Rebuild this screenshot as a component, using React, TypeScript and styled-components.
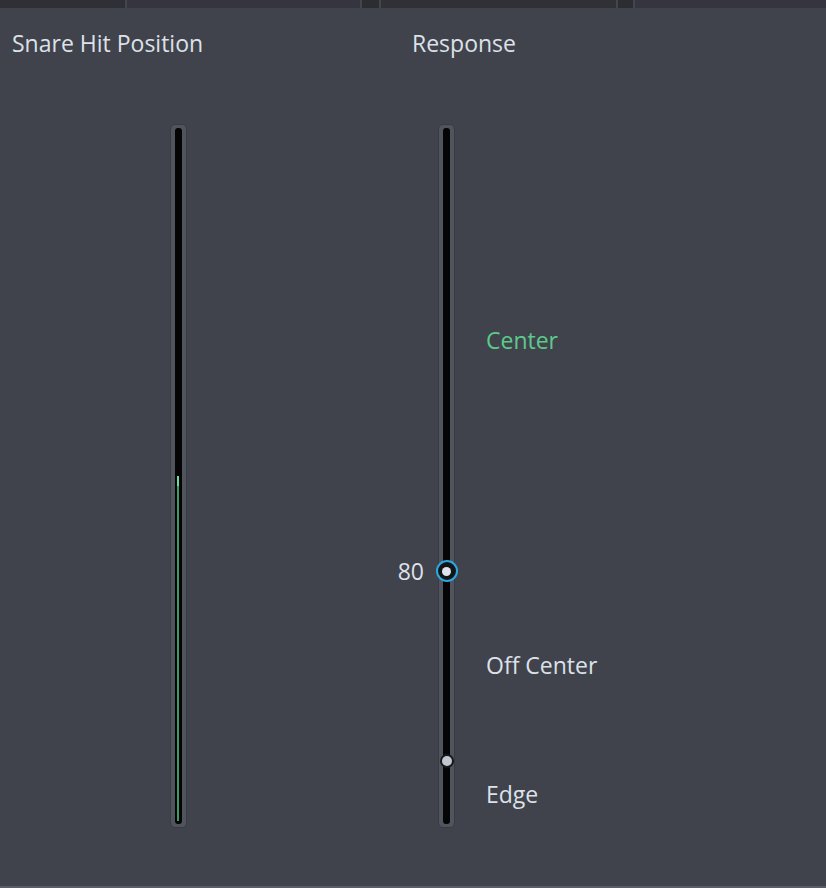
import React, { FC } from "react";
import styled, { createGlobalStyle } from "styled-components";

const GlobalStyle = createGlobalStyle`
  html, body {
    margin: 0;
    padding: 0;
    background: #40434b;
  }
  #root {
    height: 888px;
  }
`;

const Page = styled.div`
  display: flex;
  flex-direction: column;
  width: 826px;
  height: 888px;
  background: #40434b;
  font-family: "Open Sans", "Noto Sans", sans-serif;
  color: #dde1ea;
  overflow: hidden;
`;

const TabStrip = styled.div`
  display: flex;
  height: 8px;
  flex-shrink: 0;
`;

const Tab = styled.div<{ $w: number; $bg: string }>`
  width: ${(p) => p.$w}px;
  flex-shrink: 0;
  background: ${(p) => p.$bg};
`;

const Divider = styled.div`
  width: 2px;
  flex-shrink: 0;
  background: #44464d;
`;

const Body = styled.div`
  flex: 1;
  display: flex;
  padding-top: 19px;
  border-bottom: 2px solid #5b5e68;
`;

const Section = styled.div<{ $w?: number }>`
  display: flex;
  flex-direction: column;
  box-sizing: border-box;
  width: ${(p) => (p.$w ? `${p.$w}px` : "auto")};
  flex: ${(p) => (p.$w ? "none" : "1")};
  padding-left: 12px;
`;

const Title = styled.div`
  font-size: 23px;
  line-height: 32px;
`;

const Track = styled.div<{ $offset: number }>`
  position: relative;
  margin-top: 65px;
  margin-left: ${(p) => p.$offset}px;
  width: 17px;
  height: 704px;
  box-sizing: border-box;
  border: 1px solid #383b42;
  border-radius: 5px;
  background: #50545d;
  display: flex;
  justify-content: center;
  padding: 3px 0;
`;

const Channel = styled.div`
  position: relative;
  width: 7px;
  height: 100%;
  border-radius: 3px;
  background: #050506;
`;

const Fill = styled.div`
  position: absolute;
  left: 2px;
  width: 2px;
  bottom: 3px;
  background: linear-gradient(
    to bottom,
    #67dca2 0px,
    #67dca2 10px,
    #3c9b69 10px,
    #3c9b69 100%
  );
`;

const Knob = styled.div`
  position: absolute;
  left: 50%;
  width: 22px;
  height: 22px;
  box-sizing: border-box;
  border: 2px solid #2aa8df;
  border-radius: 50%;
  background: #141518;
  transform: translate(-50%, -50%);
  display: flex;
  align-items: center;
  justify-content: center;

  &::after {
    content: "";
    width: 9px;
    height: 9px;
    border-radius: 50%;
    background: #dfe3ec;
  }
`;

const Marker = styled.div`
  position: absolute;
  left: 50%;
  width: 10px;
  height: 10px;
  border-radius: 50%;
  background: #c3c6cf;
  box-shadow: 0 0 0 2px #17181b;
  transform: translate(-50%, -50%);
`;

const ScaleLabel = styled.div<{ $accent?: boolean }>`
  position: absolute;
  left: 47px;
  font-size: 23px;
  line-height: 32px;
  white-space: nowrap;
  transform: translateY(-50%);
  color: ${(p) => (p.$accent ? "#5cca8c" : "#dde1ea")};
`;

const ValueLabel = styled.div`
  position: absolute;
  right: calc(100% + 15px);
  font-size: 23px;
  line-height: 32px;
  transform: translateY(-50%);
`;

const tabs = [
  { w: 125, bg: "#2e3035" },
  { w: 233, bg: "#34353e" },
  { w: 17, bg: "#2b2d31" },
  { w: 235, bg: "#2f3136" },
  { w: 15, bg: "#2b2d31" },
  { w: 195, bg: "#34353e" },
];

const App: FC = () => {
  const fillTop = 350;
  const trackHeight = 704;

  return (
    <>
      <GlobalStyle />
      <Page>
        <TabStrip>
          {tabs.map((t, i) => (
            <React.Fragment key={i}>
              {i > 0 && <Divider />}
              <Tab $w={t.w} $bg={t.bg} />
            </React.Fragment>
          ))}
        </TabStrip>
        <Body>
          <Section $w={400}>
            <Title>Snare Hit Position</Title>
            <Track $offset={158}>
              <Channel>
                <Fill style={{ height: trackHeight - fillTop - 9 }} />
              </Channel>
            </Track>
          </Section>
          <Section>
            <Title>Response</Title>
            <Track $offset={26}>
              <Channel />
              <ScaleLabel $accent style={{ top: 215 }}>
                Center
              </ScaleLabel>
              <ValueLabel style={{ top: 446 }}>80</ValueLabel>
              <Knob style={{ top: 446 }} />
              <ScaleLabel style={{ top: 540 }}>Off Center</ScaleLabel>
              <Marker style={{ top: 636 }} />
              <ScaleLabel style={{ top: 669 }}>Edge</ScaleLabel>
            </Track>
          </Section>
        </Body>
      </Page>
    </>
  );
};

export default App;
